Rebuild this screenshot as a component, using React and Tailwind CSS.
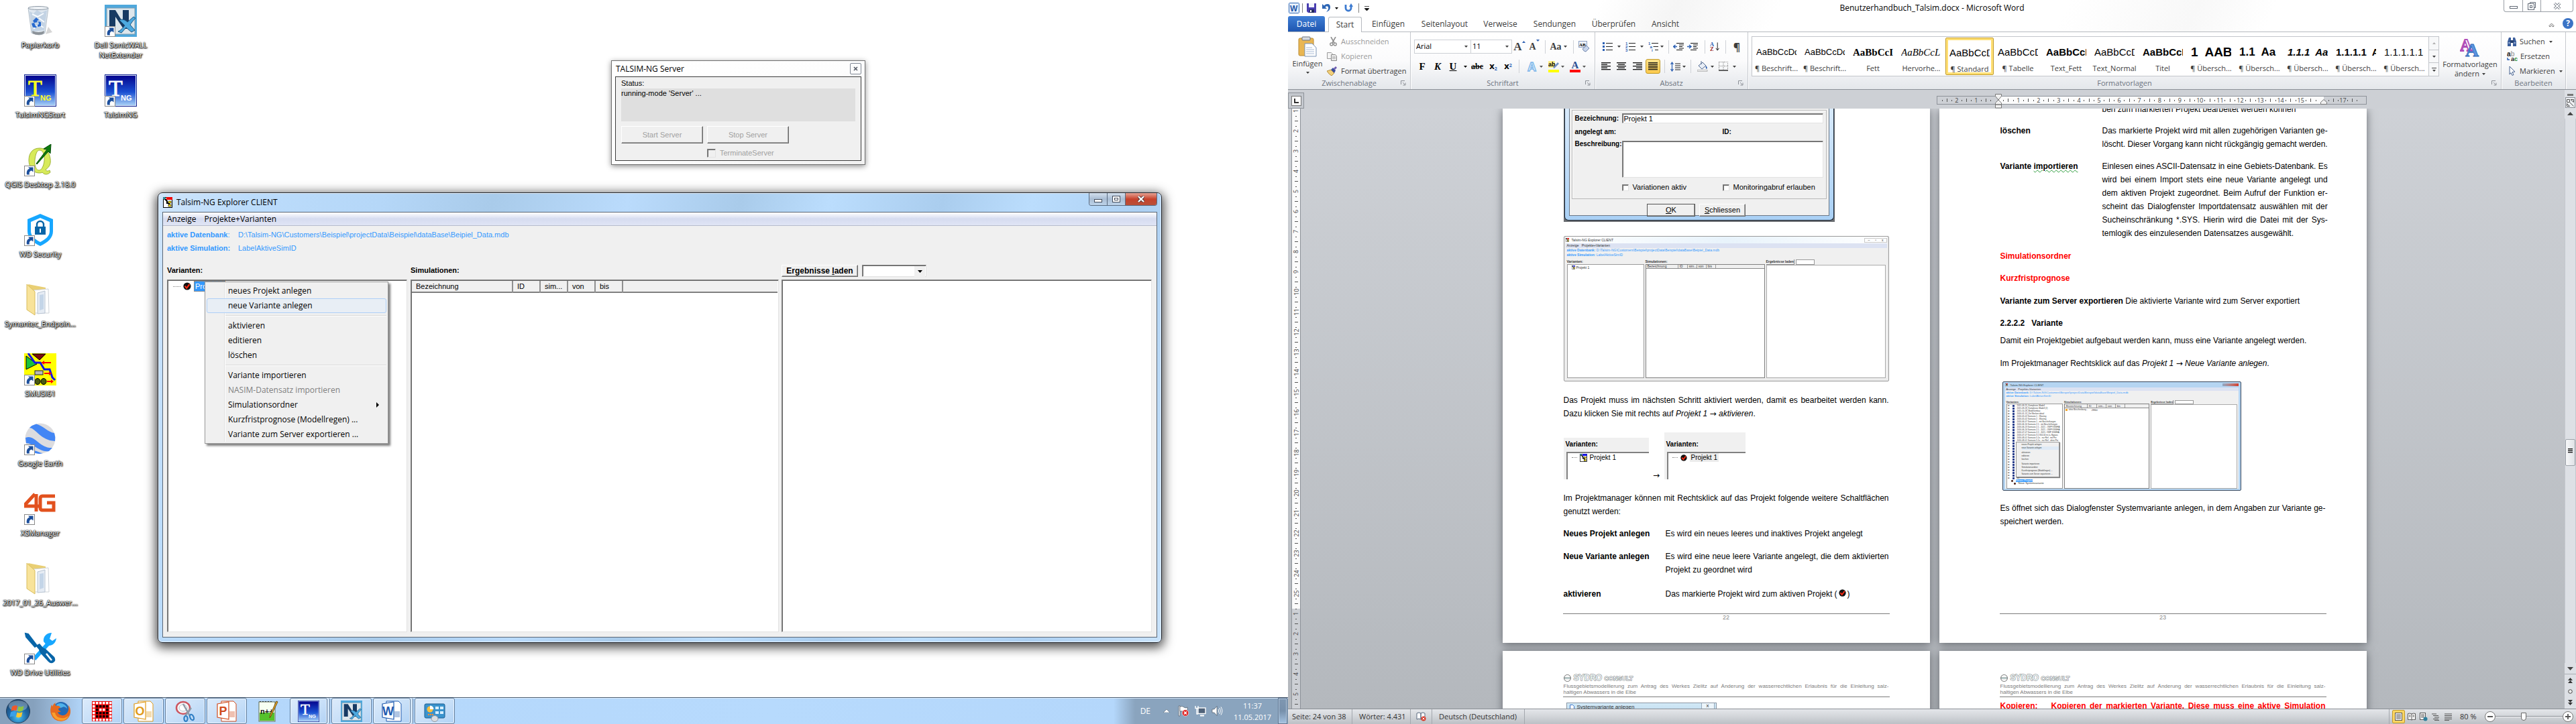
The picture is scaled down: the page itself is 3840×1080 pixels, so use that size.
import React from "react";

/* ---------- small shared pieces ---------- */

const Caret = ({ className = "" }) => (
  <svg width="5" height="3" viewBox="0 0 5 3" className={className} aria-hidden="true">
    <path d="M0 0h5L2.5 3z" fill="currentColor" />
  </svg>
);

const Launcher = () => (
  <svg width="8" height="8" viewBox="0 0 8 8" aria-hidden="true">
    <path d="M.5 6V.5H6" stroke="#8b8f96" fill="none" />
    <path d="M3 3l3 3M7 3.5V7H3.5" stroke="#8b8f96" fill="none" />
  </svg>
);

const CheckBall = ({ size = 12 }) => (
  <svg width={size} height={size} viewBox="0 0 12 12" aria-hidden="true">
    <circle cx="6" cy="6" r="5.6" fill="#111" />
    <path d="M2.6 5.6l2.6 3.2L9.6 3" stroke="#ff2a12" strokeWidth="2.1" fill="none" />
  </svg>
);

const Arrow = () => <span className="font-['DejaVu_Sans',sans-serif] not-italic">→</span>;

const AppIcon = ({ w = 14, h = 16, top = "#f00000" }) => (
  <svg width={w} height={h} viewBox="0 0 14 16" aria-hidden="true">
    <rect x=".5" y=".5" width="13" height="15" fill="#fff" stroke="#000" />
    <rect x="5" y="0" width="9" height="4" fill={top} />
    <path d="M2 2l4 4v3h3v5" stroke="#000" strokeWidth="2" fill="none" />
    <rect x="0" y="0" width="3" height="3" fill="#35d0e8" stroke="#000" strokeWidth=".6" />
    <rect x="8" y="6" width="4" height="3" fill="#ffe600" stroke="#000" strokeWidth=".6" />
    <rect x="8" y="11" width="4" height="3" fill="#ffe600" stroke="#000" strokeWidth=".6" />
  </svg>
);

/* ---------- desktop icons ---------- */

const Shortcut = () => (
  <g>
    <rect x=".5" y="32.5" width="15" height="15" fill="#fff" stroke="#8a8a8a" />
    <path d="M4 45.5c-1-5 1-8 4-9l-2-2h7.500v7l-2.500-2c-3 .8-4 3-3 6z" fill="#1c4f9c" />
  </g>
);

const RecycleBin = () => (
  <svg width="48" height="48" viewBox="0 0 48 48" aria-hidden="true">
    <path d="M32 44l10-3-6-8z" fill="#bbb" opacity=".6" />
    <path d="M6 5l5 37q13 6 20 0l5-37z" fill="#dfe7ef" stroke="#b3bfca" />
    <path d="M8 10l6 3 5-5 7 4 8-4-4 30-18 2z" fill="#c3d3e4" />
    <path d="M12 14l8 4 9-5M14 36l8-6 7 4M22 20l8 6" stroke="#f7fbff" strokeWidth="2" fill="none" />
    <ellipse cx="21" cy="5" rx="15" ry="2.5" fill="#eef2f6" stroke="#8c98a4" />
    <path d="M12 39q10 4 18 0l-.6 4q-8 4-16.8 0z" fill="#8d9399" />
    <path d="M13 24l5-5 4 4-3 1 1 2-5 1zM21 25l4 1v6l-5 1v-3l2-1zM11 28l4-1 2 5 2 .5-1 2-5-1z" fill="#2669cf" />
  </svg>
);

const TalsimIcon = ({ color, size = 48, shortcut = true, id }) => (
  <svg width={size} height={size} viewBox="0 0 48 48" aria-hidden="true">
    <defs>
      <linearGradient id={id} x1="0" y1="0" x2="0" y2="1">
        <stop offset="0" stopColor="#03038c" />
        <stop offset=".55" stopColor="#1a4fd2" />
        <stop offset="1" stopColor="#a9d2f6" />
      </linearGradient>
    </defs>
    <rect x="0" y="0" width="48" height="48" fill="#0d1f8f" />
    <rect x="1.5" y="1.5" width="45" height="45" fill={`url(#${id})`} stroke="#dfe9fb" />
    <text x="6" y="32" fontFamily="Liberation Serif, serif" fontSize="34" fill={color} stroke={color} strokeWidth=".8">T</text>
    <text x="24" y="39" fontFamily="Liberation Sans, sans-serif" fontWeight="bold" fontSize="11" fill={color}>NG</text>
    {shortcut && <Shortcut />}
  </svg>
);

const NetExtender = ({ size = 48, shortcut = true }) => (
  <svg width={size} height={size} viewBox="0 0 48 48" aria-hidden="true">
    <rect width="48" height="48" fill="#4fa8dc" />
    <rect x="3" y="5" width="42" height="39" fill="#dde6ec" stroke="#7e9bad" />
    <path d="M7 8h9l11 18V8h9v28h-8L16 18v18H7z" fill="#173a63" />
    <path d="M20 40c4-2 6-4 10-9l-8-8c4-2 8-1 12 3l9-8 3 2c-4 4-6 7-8 10l7 8-5 3-8-7-7 8z" fill="#4da9df" stroke="#1d567f" />
    {shortcut && <Shortcut />}
  </svg>
);

const Qgis = () => (
  <svg width="48" height="48" viewBox="0 0 48 48" aria-hidden="true">
    <path fillRule="evenodd" fill="#d7ea5a" stroke="#9fb338" d="M23 6C12 6 7 14 7 24s6 19 15 19c2 0 4 0 5-1 3 4 8 4 12 0l-1-3c-3 2-5 1-6-1 6-4 8-9 7-16C38 12 32 6 23 6zM23 9c5 0 8 7 7 16-1 8-4 14-8 14s-7-7-6-16c1-8 3-14 7-14z" />
    <path d="M18 29L34 8l-5-1L40 0l-1 14-3-3-17 19z" fill="#0d7a0f" stroke="#064c08" />
    <Shortcut />
  </svg>
);

const WdSecurity = () => (
  <svg width="48" height="48" viewBox="0 0 48 48" aria-hidden="true">
    <path d="M24 0l19 8v18c0 10-8 17-19 22C13 43 5 36 5 26V8z" fill="#17a7ff" />
    <path d="M24 6l14 6v14c0 7-6 12-14 16-8-4-14-9-14-16V12z" fill="#fff" />
    <rect x="16" y="19" width="16" height="12" fill="#0865a8" />
    <path d="M19 19v-3a5 5 0 0 1 10 0v3" stroke="#0865a8" strokeWidth="2.4" fill="none" />
    <rect x="23" y="22" width="2" height="6" fill="#fff" />
    <Shortcut />
  </svg>
);

const Folder = () => (
  <svg width="48" height="48" viewBox="0 0 48 48" aria-hidden="true">
    <path d="M6 1l26 5v38H12z" fill="#e9cf74" />
    <path d="M14 10l22-2 1 36H14z" fill="#fff" stroke="#cfd3d8" />
    <path d="M20 14l11-3v33l-11 1z" fill="#e6ecf4" stroke="#b8c4d2" />
    <path d="M23 17l6-1v22l-6 2z" fill="#c4d5e8" />
    <path d="M4 1l12 11v35L4 39z" fill="#f8e39a" stroke="#d9bd5d" />
  </svg>
);

const Smusi = () => (
  <svg width="48" height="48" viewBox="0 0 48 48" aria-hidden="true">
    <rect width="48" height="48" fill="#ffff00" />
    <path d="M3 4v20l16-8z" fill="#19c23a" stroke="#000" />
    <path d="M12 1h20l-9 9z" fill="#7a0d10" stroke="#000" />
    <path d="M6 0l10 14h8l6 10h8l4 12 4 4" stroke="#1414e6" strokeWidth="3" fill="none" />
    <path d="M40 14H26M30 30h10M34 42h8" stroke="#f00" strokeWidth="2" fill="none" />
    <path d="M26 14l4-3v6zM41 30l-4-3v6zM44 42l-4-3v6z" fill="#f00" />
    <rect x="16" y="26" width="12" height="6" fill="#b9b9b9" stroke="#222" />
    <ellipse cx="20" cy="42" rx="4" ry="4.5" fill="#4a5a10" stroke="#000" />
    <ellipse cx="29" cy="42" rx="4" ry="4.5" fill="#4a5a10" stroke="#000" />
    <Shortcut />
  </svg>
);

const Earth = () => (
  <svg width="48" height="48" viewBox="0 0 48 48" aria-hidden="true">
    <circle cx="24" cy="23" r="22.5" fill="#dcdcdf" />
    <path d="M8 7C18 8 24 26 46 27q1-6-1-12C36 14 28 4 18 1.500Q12 3 8 7z" fill="#4286f5" />
    <path d="M2 22C16 16 22 38 42 37l-5 5C22 44 14 30 3 30z" fill="#4286f5" />
    <path d="M10 41c8-1 12 4 18 4q-10 3-18-4z" fill="#4286f5" />
    <Shortcut />
  </svg>
);

const FourG = () => (
  <svg width="48" height="48" viewBox="0 0 48 48" aria-hidden="true">
    <path d="M16 2L2 17v3h22M18 2v26" stroke="#e2511e" strokeWidth="5" fill="none" />
    <path d="M46 5H27q-3 0-3 4v13q0 4 3 4h17V15h-10" stroke="#e2511e" strokeWidth="5" fill="none" />
    <Shortcut />
  </svg>
);

const WdTools = () => (
  <svg width="48" height="48" viewBox="0 0 48 48" aria-hidden="true">
    <path d="M15 40L35 18" stroke="#17a7ff" strokeWidth="6" />
    <path d="M41 1c-8 0-13 6-12 13l5 6c6 1 13-2 14-11l-6 4-4-3z" fill="#17a7ff" />
    <path d="M2 2l4 1 13 17-3 2L3 7z" fill="#0865a8" stroke="#0865a8" strokeWidth="2" />
    <path d="M17 20l6-3 5 6 4 2 13 12q3 5-1 8-4 3-8-1L24 31l-2-5z" fill="#0865a8" />
    <path d="M33 32l8 10" stroke="#fff" strokeWidth="2.5" />
    <Shortcut />
  </svg>
);

const desktopColumns = [
  [
    ["Papierkorb", <RecycleBin />],
    ["TalsimNGStart", <TalsimIcon color="#ffff1e" id="tng-start" />],
    ["QGIS Desktop 2.18.0", <Qgis />],
    ["WD Security", <WdSecurity />],
    ["Symantec_Endpoin...", <Folder />],
    ["SMUSI61", <Smusi />],
    ["Google Earth", <Earth />],
    ["XSManager", <FourG />],
    ["2017_01_26_Auswer...", <Folder />],
    ["WD Drive Utilities", <WdTools />],
  ],
  [
    ["Dell SonicWALL NetExtender", <NetExtender />],
    ["TalsimNG", <TalsimIcon color="#ffffff" id="tng-app" />],
  ],
];

function DesktopIcons() {
  return (
    <div className="flex">
      {desktopColumns.map((col, i) => (
        <div key={i} className="w-[120px]">
          {col.map(([label, icon]) => (
            <button key={label} className="flex h-[104px] w-full flex-col items-center pt-[7px]">
              {icon}
              <span className="mt-1 max-w-[116px] text-center text-[11px] leading-[15px] text-white [text-shadow:0_0_1px_#000,0_0_2px_#000,0_1px_2px_#000,1px_1px_2px_#000]">
                {label}
              </span>
            </button>
          ))}
        </div>
      ))}
    </div>
  );
}

/* ---------- server window ---------- */

const raised = "border border-t-white border-l-white border-r-[#696969] border-b-[#696969] shadow-[inset_-1px_-1px_0_#a0a0a0]";
const sunken = "border border-t-[#828282] border-l-[#828282] border-r-[#e3e3e3] border-b-[#e3e3e3] shadow-[inset_1px_1px_0_#696969]";

function ServerWindow() {
  return (
    <section className="absolute left-[911px] top-[90px] w-[379px] border border-[#6f6f6f] bg-gradient-to-br from-white via-[#fdfdfd] to-[#f1f1f1] px-[5px] pb-[5px] shadow-[0_2px_8px_rgba(0,0,0,0.45)]">
      <header className="flex h-[23px] items-center justify-between pl-px text-[12px]">
        <h2>TALSIM-NG Server</h2>
        <button aria-label="Schließen" className="flex h-[17px] w-[17px] items-center justify-center rounded-[2px] border border-[#808894] bg-[#fbfbfb]">
          <svg width="7" height="7" viewBox="0 0 7 7"><path d="M1 1l5 5M6 1L1 6" stroke="#555b66" strokeWidth="1.6" /></svg>
        </button>
      </header>
      <div className="border border-[#3c3c3c] bg-[#f0f0f0] px-2 pb-1 pt-0.5 font-['Liberation_Sans',sans-serif] text-[11px]">
        <p className="leading-[15px]">Status:</p>
        <div className="h-[49px] bg-[#dfdfdf] leading-[15px]">running-mode 'Server' ...</div>
        <div className="mt-[7px] flex gap-1.5 text-[#a0a0a0]">
          <button className={`h-[26px] w-[122px] ${raised}`}>Start Server</button>
          <button className={`h-[26px] w-[122px] ${raised}`}>Stop Server</button>
        </div>
        <label className="ml-32 mt-2 flex items-center gap-1.5 leading-[13px] text-[#a0a0a0]">
          <input type="checkbox" className={`size-[13px] appearance-none bg-[#f0f0f0] ${sunken}`} />
          TerminateServer
        </label>
      </div>
    </section>
  );
}

/* ---------- explorer window ---------- */

const menuGroups = [
  [["neues Projekt anlegen"], ["neue Variante anlegen", "hot"]],
  [["aktivieren"], ["editieren"], ["löschen"]],
  [
    ["Variante importieren"],
    ["NASIM-Datensatz importieren", "off"],
    ["Simulationsordner", "sub"],
    ["Kurzfristprognose (Modellregen) ..."],
    ["Variante zum Server exportieren ..."],
  ],
];

function ContextMenu() {
  return (
    <div role="menu" className="absolute left-[55px] top-0.5 z-10 w-[274px] border border-[#979797] bg-[#f0f0f0] p-0.5 text-[12px] shadow-[3px_3px_3px_rgba(0,0,0,0.5)]">
      <div className="bg-[linear-gradient(to_right,transparent_26px,#e0e0e0_26px,#e0e0e0_27px,#fff_27px,#fff_28px,transparent_28px)] font-['Open_Sans',sans-serif]">
        {menuGroups.map((items, i) => (
          <div key={i}>
            {i > 0 && <div className="mb-1 ml-7 mt-[3px] h-px bg-[#d8d8d8] shadow-[0_1px_0_#fff]" />}
            {items.map(([label, kind]) => (
              <button
                key={label}
                role="menuitem"
                disabled={kind === "off"}
                className={
                  "flex h-[22px] w-full items-center justify-between rounded-[3px] border pl-[31px] pr-2.5 " +
                  (kind === "hot" ? "border-[#aecff7] bg-[#e6edf6]/80" : kind === "off" ? "border-transparent text-[#808080]" : "border-transparent")
                }
              >
                {label}
                {kind === "sub" && <svg width="4" height="8" viewBox="0 0 4 8"><path d="M0 0l4 4-4 4z" fill="#000" /></svg>}
              </button>
            ))}
          </div>
        ))}
      </div>
    </div>
  );
}

function ExplorerWindow() {
  return (
    <section className="absolute bottom-[121px] left-[235px] right-[188px] top-[287px] flex flex-col rounded-[7px] border border-[#20242c] bg-[linear-gradient(105deg,#cfe5fb_0,#bcdcfb_8%,#b5d7f8_20%,#a9cbea_30%,#badbfc_42%,#a9cbea_52%,#bbddfd_60%,#aacdee_70%,#bbddfd_78%,#add0f2_88%,#c9e3fb_100%)] px-1.5 pb-[7px] shadow-[inset_0_0_0_1px_#e6f3ff,0_4px_16px_3px_rgba(0,0,0,0.7)]">
      <header className="flex h-[28px] items-center pl-px">
        <AppIcon />
        <h2 className="ml-1.5 text-[12px]">Talsim-NG Explorer CLIENT</h2>
        <div className="ml-auto flex h-[19px] self-start overflow-hidden rounded-b-[4px] border border-t-0 border-[#5a6b80]">
          <button aria-label="Minimieren" className="flex w-[27px] items-end justify-center border-r border-[#5a6b80] bg-gradient-to-b from-[#d4e0ee] via-[#a9bdd3] to-[#bdd3ea] pb-1">
            <span className="h-[5px] w-[12px] border border-[#434c5c] bg-white" />
          </button>
          <button aria-label="Maximieren" className="flex w-[27px] items-center justify-center border-r border-[#5a6b80] bg-gradient-to-b from-[#d4e0ee] via-[#a9bdd3] to-[#bdd3ea]">
            <span className="h-[10px] w-[12px] border border-[#434c5c] bg-white p-[2px]"><span className="block h-full border border-[#434c5c]" /></span>
          </button>
          <button aria-label="Schließen" className="flex w-[46px] items-center justify-center bg-gradient-to-b from-[#e5a193] via-[#c6412b] to-[#b8503a]">
            <svg width="12" height="10" viewBox="0 0 12 10"><path d="M2 1l8 8M10 1L2 9" stroke="#43343a" strokeWidth="4" /><path d="M2 1l8 8M10 1L2 9" stroke="#fff" strokeWidth="2.4" /></svg>
          </button>
        </div>
      </header>
      <div className="flex min-h-0 flex-1 flex-col border border-[#5b6776] bg-[#f0f0f0] font-['Liberation_Sans',sans-serif] text-[11px]">
        <nav className="flex h-5 items-center gap-3 border-b border-[#b6bccc] bg-gradient-to-b from-white via-[#d6dcf0] to-[#e0e5f5] pl-1.5 font-['Open_Sans',sans-serif] text-[12px]">
          <button>Anzeige</button>
          <button>Projekte+Varianten</button>
        </nav>
        <dl className="mt-[3px] grid grid-cols-[106px_1fr] pl-1.5 leading-5 text-[#3399ff]">
          <dt><b>aktive Datenbank</b>:</dt>
          <dd>D:\Talsim-NG\Customers\Beispiel\projectData\Beispiel\dataBase\Beipiel_Data.mdb</dd>
          <dt><b>aktive Simulation:</b></dt>
          <dd>LabelAktiveSimID</dd>
        </dl>
        <div className="mb-[7px] mt-[13px] grid min-h-0 flex-1 grid-cols-[358fr_550fr_552fr] gap-x-1 pl-1.5 pr-[7px]">
          <div className="flex flex-col">
            <h3 className="h-6 pt-0.5 font-bold">Varianten:</h3>
            <div className={`relative flex-1 bg-white ${sunken}`}>
              <div className="flex h-[18px] items-center pl-2">
                <span className="mr-1 w-[11px] border-t border-dotted border-[#808080]" />
                <CheckBall />
                <span className="ml-1 h-4 w-[47px] border border-dotted border-[#c87a2a] bg-[#3399ff] pl-px leading-[14px] text-white">Projekt 1</span>
              </div>
              <ContextMenu />
            </div>
          </div>
          <div className="flex flex-col pl-px">
            <h3 className="h-6 pt-0.5 font-bold">Simulationen:</h3>
            <div className={`flex-1 bg-white p-px ${sunken}`}>
              <table className="w-full table-fixed border-collapse bg-[#f0f0f0] text-left">
                <thead>
                  <tr className="h-[17px] border-b-2 border-[#808080]">
                    <th className="w-[150px] border-r-2 border-[#909090] pl-1.5 font-normal leading-[15px]">Bezeichnung</th>
                    <th className="w-[41px] border-r-2 border-[#909090] pl-1.5 font-normal leading-[15px]">ID</th>
                    <th className="w-[41px] border-r-2 border-[#909090] pl-1.5 font-normal leading-[15px]">sim...</th>
                    <th className="w-[41px] border-r-2 border-[#909090] pl-1.5 font-normal leading-[15px]">von</th>
                    <th className="w-[41px] border-r-2 border-[#909090] pl-1.5 font-normal leading-[15px]">bis</th>
                    <th />
                  </tr>
                </thead>
              </table>
            </div>
          </div>
          <div className="flex flex-col">
            <div className="flex h-6 items-start gap-1.5 pt-0.5">
              <button className={`h-[18px] w-[114px] text-[12px] font-bold leading-4 ${raised}`}>Ergebnisse <u>l</u>aden</button>
              <div className="relative">
                <select aria-label="Ergebnis" className={`h-[18px] w-24 appearance-none bg-white ${sunken}`}><option></option></select>
                <span className="pointer-events-none absolute right-0.5 top-0.5 flex h-4 w-4 items-center justify-center bg-[#f0f0f0]"><svg width="7" height="4" viewBox="0 0 7 4"><path d="M0 0h7L3.500 4z" /></svg></span>
              </div>
            </div>
            <div className={`flex-1 bg-white ${sunken}`} />
          </div>
        </div>
      </div>
    </section>
  );
}

/* ---------- taskbar ---------- */

const OfficeDoc = ({ letter, main }) => (
  <svg width="32" height="32" viewBox="0 0 32 32" aria-hidden="true">
    <path d="M8 1h18l4 4v26H8z" fill="#fff" stroke={main} />
    <path d="M20 16h8v9h-8z" fill={main} opacity=".35" />
    <path d="M2 5l17-3v26L2 25z" fill="#fff" stroke={main} strokeWidth="1.2" />
    <text x="10.500" y="22" textAnchor="middle" fontFamily="Liberation Sans, sans-serif" fontWeight="bold" fontSize="18" fill={main}>{letter}</text>
  </svg>
);

const StartOrb = () => (
  <svg width="38" height="38" viewBox="0 0 38 38" aria-hidden="true">
    <defs>
      <radialGradient id="orb" cx=".5" cy=".75" r=".75">
        <stop offset="0" stopColor="#4cc3f2" />
        <stop offset=".5" stopColor="#1f6aa8" />
        <stop offset="1" stopColor="#1c3f66" />
      </radialGradient>
    </defs>
    <circle cx="19" cy="19" r="17.5" fill="url(#orb)" stroke="#243f5c" />
    <ellipse cx="19" cy="11" rx="14" ry="8" fill="#fff" opacity=".3" />
    <path d="M10 12q4-3 8-1l-1.500 7q-4-1.500-8 .8z" fill="#f0582a" />
    <path d="M19.500 11.500q4 2 8-.5L26 18q-4 2.500-8 .5z" fill="#8ec63f" />
    <path d="M8 20.500q4-2.300 8-.8L14.500 27q-4-1.500-8 .8z" fill="#3aa0e8" />
    <path d="M17.500 20.500q4 2 8-.4L24 27q-4 2.500-8 .6z" fill="#fdc82f" />
  </svg>
);

const Firefox = () => (
  <svg width="32" height="32" viewBox="0 0 32 32" aria-hidden="true">
    <circle cx="17" cy="14" r="12" fill="#2369b4" />
    <path d="M10 6q6-4 12 0 4 3 4 6-4-4-7-2-4 2-8 0z" fill="#4fb2ea" />
    <path d="M3 6Q0 14 2 20q4 11 15 11 12-1 14-13 .5-7-3-11 1 6-1 10-3 6-9 5-5-1-6-5 3 1 5-1-3 0-4-3 0-2 3-2-1-4-6-3Q7 6 9 3 5 5 4.500 9z" fill="#e66a1f" />
    <path d="M3 18q3 11 14 12 8 0 12-8-5 5-12 4-8-1-9-8z" fill="#f9a02c" />
  </svg>
);

const PixelDoc = () => (
  <svg width="30" height="30" viewBox="0 0 30 30" aria-hidden="true">
    <rect width="30" height="30" fill="#e00" />
    {[0, 1, 2, 3, 4, 5].map((r) =>
      [0, 1, 2, 3, 4, 5].map((c) => (
        <rect key={`${r}${c}`} x={1 + c * 5} y={1 + r * 5} width="3.500" height="3.500" fill={(c === 1 || c === 4 || r === 1 || r === 4 || r === 3) && c > 0 && c < 5 && r > 0 && r < 5 ? "#000" : "#fff"} />
      ))
    )}
  </svg>
);

const Snip = () => (
  <svg width="34" height="34" viewBox="0 0 34 34" aria-hidden="true">
    <ellipse cx="14" cy="12" rx="10" ry="9" fill="#f6f8fa" stroke="#cc5560" strokeWidth="2.5" />
    <ellipse cx="14" cy="12" rx="6" ry="5" fill="#fff" stroke="#b9c0c8" />
    <path d="M14 6l10 18M26 12L17 24" stroke="#8e9aa8" strokeWidth="2.5" />
    <ellipse cx="18" cy="28" rx="2.6" ry="4" fill="none" stroke="#2f7fc4" strokeWidth="2.2" />
    <ellipse cx="27" cy="26" rx="2.6" ry="4.5" fill="none" stroke="#2f7fc4" strokeWidth="2.2" transform="rotate(-25 27 26)" />
  </svg>
);

const Npp = () => (
  <svg width="32" height="32" viewBox="0 0 32 32" aria-hidden="true">
    <rect x="2" y="2" width="24" height="29" fill="#f7fff2" stroke="#5c6c54" />
    <rect x="3" y="18" width="22" height="12" fill="#55c22c" />
    <path d="M4 2v-1M8 2v-1M12 2v-1M16 2v-1M20 2v-1" stroke="#333" strokeWidth="2" />
    <text x="4" y="20" fontFamily="Liberation Sans, sans-serif" fontWeight="bold" fontSize="11" fill="#111">n++</text>
    <path d="M30 2l-10 21-2 3 .5-4L28 1z" fill="#f3b229" stroke="#6b4a12" />
  </svg>
);

const Panel = () => (
  <svg width="34" height="32" viewBox="0 0 34 32" aria-hidden="true">
    <rect x="2" y="5" width="30" height="21" rx="2" fill="#3a93cd" stroke="#1d5f92" />
    <circle cx="10" cy="13" r="4.5" fill="#ffc03a" />
    <path d="M10 13V7.500a5.500 5.500 0 0 1 5.500 5.500z" fill="#fff" />
    <path d="M18 9h5v4h-5zM25 9h5v4h-5zM18 16h5v4h-5zM25 16h5v4h-5z" fill="#d7efff" />
    <path d="M7 21h8" stroke="#ff8c2a" strokeWidth="2" strokeDasharray="2 1" />
    <ellipse cx="17" cy="27" rx="5" ry="4.5" fill="#d9dde2" stroke="#9298a0" />
  </svg>
);

const tasks = [
  ["Kalender", <PixelDoc />, "open"],
  ["Outlook", <OfficeDoc letter="O" main="#e09a1a" />, "open"],
  ["Snipping Tool", <Snip />, "open"],
  ["PowerPoint", <OfficeDoc letter="P" main="#d04a1c" />, "open"],
  ["Notepad++", <Npp />, ""],
  ["TalsimNG", <TalsimIcon color="#fff" size={32} shortcut={false} id="tng-task" />, "stack"],
  ["NetExtender", <NetExtender size={32} shortcut={false} />, "open"],
  ["Word", <OfficeDoc letter="W" main="#1f5bb0" />, "stack"],
  ["Systemsteuerung", <Panel />, "open"],
];

const taskFace = "border border-[#5f7c9c] bg-gradient-to-br from-[#dcebfb] via-[#c9e0f8] to-[#b2d3f5] shadow-[inset_0_0_0_1px_#eaf4ff]";

function Taskbar() {
  return (
    <footer className="absolute inset-x-0 bottom-0 flex h-10 items-stretch border-t border-[#4c5d70] bg-[linear-gradient(to_right,#86a1bd_0,#86a1bd_50px,#b3d6fa_125px,#b7dafd_60%,#b4d7fb_calc(100%-260px),#8aa4be_calc(100%-228px),#8aa4be_100%)] shadow-[inset_0_1px_0_#dcecfc]">
      <button aria-label="Start" className="flex w-[60px] items-center justify-center pr-1.5"><StartOrb /></button>
      <button aria-label="Firefox" className="flex w-[60px] items-center justify-center"><Firefox /></button>
      <div className="ml-0.5 flex gap-0.5">
        {tasks.map(([name, icon, kind]) => (
          <div key={name} className={"flex w-[60px] " + (kind === "stack" ? "rounded-[3px] border-r border-[#5f7c9c] bg-[#d3e6fa] pr-[3px]" : "")}>
            <button aria-label={name} className={"flex flex-1 items-center justify-center rounded-[3px] " + (kind ? taskFace : "")}>
              {icon}
            </button>
          </div>
        ))}
      </div>
      <div className="ml-auto flex items-center text-[12px] text-white">
        <span className="mr-[19px]">DE</span>
        <svg width="10" height="5" viewBox="0 0 10 5"><path d="M0 5h10L5 0z" fill="#fff" stroke="#4f5f72" strokeWidth=".6" /></svg>
        <svg className="ml-3" width="17" height="17" viewBox="0 0 17 17" aria-hidden="true">
          <path d="M1 1h2v15H1z" fill="#fff" stroke="#3c4855" strokeWidth=".6" />
          <path d="M3 2q4-1 6 1t5 0v7q-3 2-5 0T3 9z" fill="#fff" stroke="#3c4855" strokeWidth=".6" />
          <circle cx="11" cy="11.500" r="4.800" fill="#d22" stroke="#fff" strokeWidth=".6" />
          <path d="M9 9.500l4 4M13 9.500l-4 4" stroke="#fff" strokeWidth="1.500" />
        </svg>
        <svg className="ml-2" width="17" height="17" viewBox="0 0 17 17" aria-hidden="true">
          <rect x="5" y="4" width="11" height="8.500" fill="#50637a" stroke="#fff" strokeWidth="1.400" />
          <path d="M8 15.500h6" stroke="#fff" strokeWidth="2" />
          <path d="M1 1v3.500h4V1M3 4v9h2" stroke="#fff" strokeWidth="1.400" fill="none" />
        </svg>
        <svg className="ml-2" width="17" height="17" viewBox="0 0 17 17" aria-hidden="true">
          <path d="M1 6h3l4-4.500v14L4 11H1z" fill="#fff" stroke="#3c4855" strokeWidth=".6" />
          <path d="M10 6q1.500 2.500 0 5M12 4q3 4.500 0 9M14 2.500q4 6 0 12" stroke="#fff" fill="none" />
        </svg>
        <div className="ml-3 w-16 text-center text-[11px] leading-[17px]"><div>11:37</div><div>11.05.2017</div></div>
        <button aria-label="Desktop anzeigen" className="ml-1.5 mr-px h-full w-[14px] border border-[#5d7591] bg-gradient-to-b from-[#7f97b1] via-[#7790ab] to-[#a5c3e2] shadow-[inset_0_0_0_1px_#b7cbe0]" />
      </div>
    </footer>
  );
}

/* ---------- word: title bar and ribbon ---------- */

const Sep = ({ className }) => (
  <span className={`flex h-full shrink-0 items-center justify-center ${className}`}><span className="h-5 w-px bg-[#cfd2d7]" /></span>
);

const RB = ({ label, className = "", children }) => (
  <button aria-label={label} title={label} className={`flex h-full shrink-0 items-center justify-center gap-[3px] ${className}`}>{children}</button>
);

const Bars = ({ rows, w = 14 }) => (
  <svg width={w} height="12" viewBox={`0 0 ${w} 12`} aria-hidden="true">
    {rows.map(([x, len], i) => <rect key={i} x={x} y={i * 2.5} width={len} height="1.3" fill="#111" />)}
  </svg>
);

const ListIcon = ({ kind }) => (
  <svg width="15" height="15" viewBox="0 0 15 15" aria-hidden="true">
    {[2, 7, 12].map((y, i) => (
      <g key={y}>
        <path d={`M${kind === "multi" ? 5 + i * 2.5 : 5} ${y + 0.5}H15`} stroke="#222" />
        {kind === "bullet"
          ? <rect x="0" y={y - 1} width="3" height="3" fill="#2b5fb3" />
          : <text x={kind === "multi" ? i * 2.5 : 0} y={y + 3} fontSize="6" fontFamily="Liberation Sans, sans-serif" fontWeight="bold" fill="#2b5fb3">{kind === "multi" ? ["1", "a", "i"][i] : i + 1}</text>}
      </g>
    ))}
  </svg>
);

const IndentIcon = ({ right }) => (
  <svg width="16" height="14" viewBox="0 0 16 14" aria-hidden="true">
    <path d="M5 1.500h11M9 4h7M9 6.500h5M9 9h7M5 11.500h9" stroke="#111" />
    <path d={right ? "M0 6.500h5M3 4l3 2.500L3 9" : "M6 6.500H1M3.500 4l-3 2.500 3 2.500"} stroke="#2b5fb3" strokeWidth="1.5" fill="none" />
  </svg>
);

const tabs = [
  ["Einfügen", "w-[79px]"], ["Seitenlayout", "w-[89px]"], ["Verweise", "w-[77px]"], ["Sendungen", "w-[85px]"], ["Überprüfen", "w-[91px]"], ["Ansicht", "w-[63px]"],
];

function TitleAndTabs() {
  return (
    <header className="bg-[linear-gradient(115deg,#fff_0,#fff_24%,#f5f5f5_30%,#fff_38%,#fff_60%,#f8f8f8_70%,#fff_76%)]">
      <div className="relative flex h-6 items-center justify-between pl-px">
        <div className="flex items-center">
          <svg width="16" height="16" viewBox="0 0 16 16" aria-hidden="true"><rect x=".5" y=".5" width="15" height="15" rx="1" fill="#e9f1fc" stroke="#2d66b5" /><text x="2" y="12.500" fontSize="12" fontWeight="bold" fontFamily="Liberation Sans, sans-serif" fill="#1d56a8">W</text></svg>
          <span className="mx-1 h-3.5 w-px bg-[#808080]" />
          <button aria-label="Speichern" className="ml-0.5">
            <svg width="14" height="14" viewBox="0 0 14 14"><path d="M0 0h14v14H2l-2-2z" fill="#4a3fb0" /><rect x="3" y="0" width="8" height="6" fill="#f2f4fb" /><rect x="4" y="9" width="7" height="5" fill="#222a5c" /><rect x="5" y="10" width="2" height="3" fill="#fff" /></svg>
          </button>
          <button aria-label="Rückgängig" className="ml-2 flex items-center gap-1.5">
            <svg width="14" height="14" viewBox="0 0 14 14"><path d="M1 1v7h7L5.500 5.500Q9 3 10 6t-3 7q6-2 6-7T9 1 4 3.500z" fill="#2d66b5" /></svg>
            <Caret />
          </button>
          <button aria-label="Wiederholen" className="ml-2">
            <svg width="14" height="14" viewBox="0 0 14 14"><path d="M3 2v5a4 4 0 0 0 8 0V5" stroke="#3c7ad0" strokeWidth="2.8" fill="none" /><path d="M8 5l3-5 3 5z" fill="#3c7ad0" /></svg>
          </button>
          <span className="mx-2 h-3.5 w-px bg-[#808080]" />
          <button aria-label="Symbolleiste anpassen"><svg width="7" height="7" viewBox="0 0 7 7"><path d="M0 .5h7M0 3.500h7L3.500 7z" stroke="#222" strokeWidth=".8" /></svg></button>
        </div>
        <div className="mr-1 flex h-[18px] self-start rounded-b-[4px] border border-t-0 border-[#9a9fa6] bg-white/70">
          <button aria-label="Minimieren" className="flex w-[28px] items-end justify-center border-r border-[#9a9fa6] pb-1"><span className="h-[4px] w-3 border border-[#626a76]" /></button>
          <button aria-label="Verkleinern" className="flex w-[27px] items-center justify-center border-r border-[#9a9fa6]">
            <svg width="12" height="12" viewBox="0 0 12 12"><path d="M3.500 2.500v-2h8v8h-2" stroke="#626a76" fill="none" /><rect x=".5" y="2.500" width="9" height="9" fill="#fff" stroke="#626a76" /><rect x="3.500" y="5.500" width="3" height="3" fill="none" stroke="#626a76" /></svg>
          </button>
          <button aria-label="Schließen" className="flex w-[47px] items-center justify-center">
            <svg width="12" height="10" viewBox="0 0 12 10"><path d="M2 1l8 8M10 1L2 9" stroke="#626a76" strokeWidth="3.6" /><path d="M2 1l8 8M10 1L2 9" stroke="#fff" strokeWidth="1.8" /></svg>
          </button>
        </div>
        <h1 className="pointer-events-none absolute inset-0 flex items-center justify-center text-[12px]">Benutzerhandbuch_Talsim.docx - Microsoft Word</h1>
      </div>
      <nav className="flex h-6 items-end border-b border-[#b6babf] text-[12px] text-[#3d3d3d]">
        <button className="h-[23px] w-[55px] rounded-t-[3px] bg-gradient-to-b from-[#3f7fd6] to-[#1f56b0] text-white">Datei</button>
        <button className="relative top-px ml-[5px] h-[23px] w-[50px] rounded-t-[3px] border border-b-0 border-[#b6babf] bg-white">Start</button>
        {tabs.map(([t, w]) => <button key={t} className={`h-[23px] ${w}`}>{t}</button>)}
        <button aria-label="Menüband minimieren" className="mb-1.5 ml-auto mr-3"><svg width="9" height="8" viewBox="0 0 9 8"><path d="M1 5.500L4.500 2 8 5.500l-1 1.500-2.500-2L2 7z" fill="#fff" stroke="#666" /></svg></button>
        <button aria-label="Hilfe" className="mb-1 mr-1 flex size-4 items-center justify-center rounded-full bg-[#3b73c5] text-[12px] font-bold leading-none text-white">?</button>
      </nav>
    </header>
  );
}

const Group = ({ title, launcher, className, children }) => (
  <section className={`flex shrink-0 flex-col border-r border-[#c6c9ce] shadow-[1px_0_0_#fff] ${className}`}>
    <div className="min-h-0 flex-1">{children}</div>
    <div className="relative flex h-[17px] items-center justify-center text-[#6d7480]">
      {title}
      {launcher && <span className="absolute right-1.5 top-1"><Launcher /></span>}
    </div>
  </section>
);

const sans = "font-['Liberation_Sans',sans-serif]";
const styles = [
  ["AaBbCcDd", "¶ Beschrift...", `${sans} text-[13px]`],
  ["AaBbCcDd", "¶ Beschrift...", `${sans} text-[13px]`],
  ["AaBbCcI", "Fett", "font-['Liberation_Serif',serif] text-[15px] font-bold"],
  ["AaBbCcL", "Hervorhe...", "font-['Liberation_Serif',serif] text-[15px] italic"],
  ["AaBbCcD", "¶ Standard", `${sans} text-[15px]`],
  ["AaBbCcD", "¶ Tabelle", `${sans} text-[15px]`],
  ["AaBbCcI", "Text_Fett", `${sans} text-[15px] font-bold`],
  ["AaBbCcD", "Text_Normal", `${sans} text-[15px]`],
  ["AaBbCcI", "Titel", `${sans} text-[15px] font-bold`],
  ["1  AAB", "¶ Übersch...", `${sans} text-[19px] font-bold`],
  ["1.1  Aa", "¶ Übersch...", `${sans} text-[17px] font-bold`],
  ["1.1.1  Aa", "¶ Übersch...", `${sans} text-[15px] font-bold italic`],
  ["1.1.1.1  A", "¶ Übersch...", `${sans} text-[15px] font-bold`],
  ["1.1.1.1.1", "¶ Übersch...", `${sans} text-[15px]`],
];

function Ribbon() {
  return (
    <div className="flex h-[86px] shrink-0 whitespace-nowrap border-b border-[#8b9097] bg-gradient-to-b from-white via-[#fbfbfc] to-[#e4e7eb] text-[11px] text-[#3d3d3d]">
      <Group title="Zwischenablage" launcher className="w-[183px]">
        <div className="flex">
          <button className="flex w-[58px] shrink-0 flex-col items-center pt-1.5">
            <svg width="28" height="31" viewBox="0 0 28 31" aria-hidden="true">
              <rect x="1" y="3" width="22" height="26" rx="2" fill="#e9b652" stroke="#b98a35" />
              <rect x="6" y="1" width="12" height="5" rx="1" fill="#d5d9df" stroke="#6c7480" />
              <path d="M10 11h11l6 6v13H10z" fill="#fff" stroke="#7b93b5" />
              <path d="M12 17h9M12 20h12M12 23h12M12 26h12" stroke="#a9bcd6" />
            </svg>
            <span className="mt-0.5 leading-4">Einfügen</span>
            <Caret className="mt-1" />
          </button>
          <div className="flex flex-col pt-[3px]">
            <button className="flex h-[22px] items-center gap-1.5 pl-1 text-[#9a9a9a]">
              <svg width="11" height="14" viewBox="0 0 11 14"><path d="M2 0l5 9M9 0L4 9" stroke="#8f8f8f" strokeWidth="1.6" /><circle cx="2.8" cy="11" r="2" fill="none" stroke="#8f8f8f" strokeWidth="1.4" /><circle cx="8.2" cy="11" r="2" fill="none" stroke="#8f8f8f" strokeWidth="1.4" /></svg>
              Ausschneiden
            </button>
            <button className="flex h-[22px] items-center gap-1.5 text-[#9a9a9a]">
              <svg width="15" height="13" viewBox="0 0 15 13"><path d="M.5.5h6l2 2v7h-8z" fill="#f4f4f4" stroke="#9a9a9a" /><path d="M6.500 3.500h6l2 2v7h-8z" fill="#e9e9e9" stroke="#8a8a8a" /><path d="M8 7h5M8 9h5" stroke="#a5a5a5" /></svg>
              Kopieren
            </button>
            <button className="flex h-[22px] items-center gap-1.5">
              <svg width="15" height="14" viewBox="0 0 15 14"><path d="M0 7l6-2 5 5-4 4q-4-2-7-7z" fill="#f1cf7a" stroke="#b6903c" /><path d="M6 5l3-3 4 4-2 4z" fill="#3b4e9c" /><path d="M10 3l3-3 2 2-3 3z" fill="#6f5bb0" /></svg>
              Format übertragen
            </button>
          </div>
        </div>
      </Group>
      <Group title="Schriftart" launcher className="w-[275px]">
        <div className="flex h-[32px] items-center pl-[5px] pt-[11px]">
          <label className="relative flex h-[21px] w-[85px] items-center border border-[#cdd0d5] bg-white">
            <input aria-label="Schriftart" defaultValue="Arial" className="w-full bg-transparent pl-0.5 text-black" /><Caret className="absolute right-1" />
          </label>
          <label className="relative flex h-[21px] w-[61px] items-center border border-l-0 border-[#cdd0d5] bg-white">
            <input aria-label="Schriftgrad" defaultValue="11" className="w-full bg-transparent pl-0.5 text-black" /><Caret className="absolute right-1" />
          </label>
          <RB label="Schrift vergrößern" className="w-[22px] font-['Liberation_Serif',serif] text-[17px] font-bold"><span className="flex">A<Caret className="mt-1 rotate-180 text-[#2b5fb3]" /></span></RB>
          <RB label="Schrift verkleinern" className="w-[22px] font-['Liberation_Serif',serif] text-[14px] font-bold"><span className="flex">A<Caret className="text-[#2b5fb3]" /></span></RB>
          <Sep className="w-[10px]" />
          <RB label="Groß-/Kleinschreibung" className="w-[30px] font-['Liberation_Serif',serif] text-[14px] font-bold">Aa<Caret /></RB>
          <Sep className="w-[14px]" />
          <RB label="Formatierung löschen" className="w-[18px]">
            <svg width="17" height="17" viewBox="0 0 17 17"><rect x=".5" y=".5" width="12" height="9" fill="#eef2fa" stroke="#8ca0c4" /><text x="1" y="8" fontSize="7" fontWeight="bold" fontFamily="Liberation Serif, serif">AB</text><path d="M6 12l6-5 4 4-5 5q-3 0-5-4z" fill="#c9d6ec" stroke="#7186ad" /></svg>
          </RB>
        </div>
        <div className="mt-2 flex h-[22px] items-center pl-[5px] text-black">
          <RB label="Fett" className="w-6 font-['Liberation_Serif',serif] text-[15px] font-bold">F</RB>
          <RB label="Kursiv" className="w-[22px] font-['Liberation_Serif',serif] text-[15px] font-bold italic">K</RB>
          <RB label="Unterstrichen" className="w-6 font-['Liberation_Serif',serif] text-[15px] font-bold underline">U</RB>
          <RB label="Unterstreichungsart" className="w-3"><Caret /></RB>
          <RB label="Durchgestrichen" className="w-6 font-['Liberation_Serif',serif] text-[12px] font-bold line-through">abc</RB>
          <RB label="Tiefgestellt" className="w-6 text-[13px] font-bold"><span>x<sub className="text-[7px] text-[#2b5fb3]">2</sub></span></RB>
          <RB label="Hochgestellt" className="w-5 text-[13px] font-bold"><span>x<sup className="text-[7px] text-[#2b5fb3]">2</sup></span></RB>
          <Sep className="w-3" />
          <RB label="Texteffekte" className="w-[34px]"><svg width="17" height="17" viewBox="0 0 17 17"><text x="2" y="15" fontSize="18" fontWeight="bold" fontFamily="Liberation Sans, sans-serif" fill="#fff" stroke="#7db7ea" strokeWidth="1.4">A</text></svg><Caret className="text-[#555]" /></RB>
          <RB label="Hervorhebungsfarbe" className="w-8"><svg width="16" height="17" viewBox="0 0 16 17"><rect width="10" height="10" fill="#fdf28a" /><text x="0" y="8" fontSize="9" fontWeight="bold" fontFamily="Liberation Sans, sans-serif">ab</text><path d="M7 10l7-8 2 2-7 7z" fill="#6f8fc4" /><rect y="13" width="16" height="4" fill="#ffff00" /></svg><Caret className="text-[#555]" /></RB>
          <RB label="Schriftfarbe" className="w-8"><svg width="16" height="17" viewBox="0 0 16 17"><text x="2.500" y="11" fontSize="15" fontWeight="bold" fontFamily="Liberation Serif, serif" fill="#2b4f94">A</text><rect y="13" width="16" height="4" fill="#ff0000" /></svg><Caret className="text-[#555]" /></RB>
        </div>
      </Group>
      <Group title="Absatz" launcher className="w-[228px]">
        <div className="flex h-[32px] items-center pl-[7px] pt-[11px]">
          <RB label="Aufzählung" className="w-[34px]"><ListIcon kind="bullet" /><Caret className="ml-1" /></RB>
          <RB label="Nummerierung" className="w-[34px]"><ListIcon kind="number" /><Caret className="ml-1" /></RB>
          <RB label="Liste mit mehreren Ebenen" className="w-[30px]"><ListIcon kind="multi" /><Caret /></RB>
          <Sep className="w-2" />
          <RB label="Einzug verkleinern" className="w-[22px]"><IndentIcon /></RB>
          <RB label="Einzug vergrößern" className="w-5"><IndentIcon right /></RB>
          <Sep className="w-4" />
          <RB label="Sortieren" className="w-3.5"><svg width="15" height="17" viewBox="0 0 15 17"><text x="0" y="8" fontSize="9" fontWeight="bold" fontFamily="Liberation Serif, serif" fill="#2b5fb3">A</text><text x="0" y="16" fontSize="9" fontWeight="bold" fontFamily="Liberation Serif, serif" fill="#9a2b2b">Z</text><path d="M12 2v12M9.500 11l2.500 3.500 2.500-3.500" stroke="#111" fill="none" /></svg></RB>
          <Sep className="w-[18px]" />
          <RB label="Alle anzeigen" className="w-4 text-[16px] font-bold">¶</RB>
        </div>
        <div className="mt-2 flex h-[22px] items-center pl-[5px]">
          <RB label="Linksbündig" className="w-[22px]"><Bars rows={[[0, 14], [0, 9], [0, 14], [0, 9], [0, 14]]} /></RB>
          <RB label="Zentriert" className="w-6"><Bars rows={[[0, 14], [2, 10], [0, 14], [2, 10], [0, 14]]} /></RB>
          <RB label="Rechtsbündig" className="w-6"><Bars rows={[[0, 14], [5, 9], [0, 14], [5, 9], [0, 14]]} /></RB>
          <RB label="Blocksatz" className="w-[22px] rounded-[3px] border border-[#c29b29] bg-gradient-to-b from-[#fde18a] to-[#fbc94a]"><Bars rows={[[0, 14], [0, 14], [0, 14], [0, 14], [0, 14]]} /></RB>
          <Sep className="w-3" />
          <RB label="Zeilenabstand" className="w-7"><svg width="15" height="15" viewBox="0 0 15 15"><path d="M2.500 1v13M.5 4l2-3 2 3M.5 11l2 3 2-3" stroke="#2b5fb3" fill="none" strokeWidth="1.2" /><path d="M7 3h8M7 6h8M7 9h8M7 12h8" stroke="#222" /></svg><Caret /></RB>
          <Sep className="w-2.5" />
          <RB label="Schattierung" className="w-[34px]"><svg width="16" height="16" viewBox="0 0 16 16"><path d="M2 7l6-5 5 5-6 5z" fill="#e8eef7" stroke="#51698f" /><path d="M13 7q3 3 1 5-2-1-1-5z" fill="#2b5fb3" /><path d="M6 0v5" stroke="#51698f" /><rect y="13.500" width="15" height="2" fill="#fff" stroke="#9a9a9a" strokeWidth=".7" /></svg><Caret className="ml-px" /></RB>
          <RB label="Rahmen" className="w-8"><svg width="14" height="14" viewBox="0 0 14 14"><path d="M.5.5h13v12M.5.5v12M7 .5v12M.5 6.500h13" stroke="#666" strokeDasharray="1 1.500" fill="none" /><path d="M0 13h14" stroke="#222" strokeWidth="1.4" /></svg><Caret className="ml-1" /></RB>
        </div>
      </Group>
      <Group title="Formatvorlagen" launcher className="min-w-0 flex-1">
        <div className="flex pl-[5px] pt-1.5">
          <div className="flex h-[60px] min-w-0 border border-[#c3c6cb] bg-white">
            {styles.map(([sample, name, cls], i) => (
              <button key={i} className={"flex w-[72px] shrink-0 flex-col items-center overflow-hidden " + (i === 4 ? "my-px rounded-[2px] border border-[#c29b29] shadow-[inset_0_0_0_3px_#ffdf74]" : "border border-transparent")}>
                <span className={`mt-2 h-7 w-[60px] overflow-hidden whitespace-pre text-left leading-7 text-black ${cls}`}>{sample}</span>
                <span className="mt-0.5 text-[11px] leading-4">{name}</span>
              </button>
            ))}
            <div className="flex w-[15px] shrink-0 flex-col divide-y divide-[#c3c6cb] border-l border-[#c3c6cb] bg-[#f7f8f9]">
              <button aria-label="Zeile nach oben" className="flex flex-1 items-center justify-center text-[#b0b0b0]"><Caret className="rotate-180" /></button>
              <button aria-label="Zeile nach unten" className="flex flex-1 items-center justify-center"><Caret /></button>
              <button aria-label="Weitere" className="flex flex-1 flex-col items-center justify-center gap-0.5"><span className="h-px w-[7px] bg-[#444]" /><Caret /></button>
            </div>
          </div>
          <button className="flex flex-1 flex-col items-center pt-0.5 leading-[14px]">
            <svg width="30" height="30" viewBox="0 0 30 30" aria-hidden="true">
              <text x="0" y="20" fontSize="25" fontWeight="bold" fontFamily="Liberation Serif, serif" fill="#fff" stroke="#b14fb8" strokeWidth="1.8">A</text>
              <text x="8" y="28" fontSize="28" fontWeight="bold" fontFamily="Liberation Serif, serif" fill="#5b94e0" stroke="#2d66b5" strokeWidth=".8">A</text>
            </svg>
            <span className="mt-[3px]">Formatvorlagen</span>
            <span className="flex items-center gap-1">ändern <Caret /></span>
          </button>
        </div>
      </Group>
      <Group title="Bearbeiten" className="w-24">
        <div className="flex flex-col pl-2 pt-[3px]">
          <button className="flex h-[22px] items-center gap-1"><svg width="15" height="14" viewBox="0 0 15 14"><path d="M1 14V7l2-6h3v13zM9 14V1h3l2 6v7z" fill="#3c5f9c" /><path d="M5 5h5v4H5z" fill="#24406f" /><path d="M2 9h3M10 9h3" stroke="#dbe6f6" /></svg>Suchen <Caret className="ml-0.5" /></button>
          <button className="flex h-[22px] items-center gap-1"><svg width="16" height="16" viewBox="0 0 16 16"><text x="0" y="8" fontSize="10" fontWeight="bold" fontFamily="Liberation Sans, sans-serif" fill="#222">a<tspan fill="#aaa">b</tspan></text><text x="6" y="15" fontSize="9" fontWeight="bold" fontFamily="Liberation Sans, sans-serif" fill="#222">a<tspan fill="#1b8a2a">c</tspan></text><path d="M1 10v3h3" stroke="#2b5fb3" fill="none" strokeWidth="1.4" /></svg>Ersetzen</button>
          <button className="flex h-[22px] items-center gap-1"><svg width="15" height="14" viewBox="0 0 15 14"><path d="M4 0l8 8-4 .5 2 4-2 1-2-4-2 2.500z" fill="#fff" stroke="#44618f" /></svg>Markieren <Caret className="ml-0.5" /></button>
        </div>
      </Group>
      <div className="w-[15px]" />
    </div>
  );
}

/* ---------- word: rulers ---------- */

const RulerCells = ({ labels }) =>
  labels.map((n, i) => (
    <span key={i} className="grid flex-1 grid-cols-4 items-center justify-items-center">
      <i className="h-0.5 w-px bg-[#555]" />
      <i className="h-[5px] w-px bg-[#555]" />
      <i className="h-0.5 w-px bg-[#555]" />
      <span className="flex w-0 justify-center">{n}</span>
    </span>
  ));

function HRuler() {
  return (
    <div className="mx-auto flex h-[13px] w-[641px] border border-[#8d9299] bg-[linear-gradient(to_right,#cdd0d5_91px,#fbfbfb_91px,#fbfbfb_576px,#cdd0d5_576px)] text-[9px] leading-none text-[#444]">
      <div className="flex w-[91px] pl-1"><RulerCells labels={["2", "1", ""]} /></div>
      <div className="relative flex w-[485px] pl-1">
        <RulerCells labels={["1", "2", "3", "4", "5", "6", "7", "8", "9", "10", "11", "12", "13", "14", "15", ""]} />
        <svg className="absolute -left-[5px] -top-1" width="10" height="22" viewBox="0 0 10 22" aria-hidden="true">
          <path d="M.5.500h9v3L5 9 .5 3.500zM.5 16V13.500L5 9l4.500 4.500V16zM.5 16h9v5h-9z" fill="#f1f1f1" stroke="#777" />
        </svg>
        <svg className="absolute -right-[5px] top-1" width="10" height="8" viewBox="0 0 10 8" aria-hidden="true">
          <path d="M.5 7.500V4.500L5 .5l4.500 4v3z" fill="#f1f1f1" stroke="#777" />
        </svg>
      </div>
      <div className="flex w-[61px] pl-1"><RulerCells labels={["17", ""]} /></div>
    </div>
  );
}

const vNumbers = Array.from({ length: 31 }, (_, i) => i + 1);

function VRuler() {
  return (
    <div className="ml-[5px] flex w-[14px] flex-col overflow-hidden border-x border-[#8d9299] bg-[linear-gradient(to_bottom,#fbfbfb_746px,#cdd0d5_746px,#cdd0d5_100%)] text-[9px] leading-none text-[#444]">
      {vNumbers.map((n) => (
        <span key={n} className="grid h-[30px] shrink-0 grid-rows-4 items-center justify-items-center">
          <span className="-rotate-90">{n > 25 ? n - 25 : n}</span>
          <i className="h-px w-0.5 bg-[#555]" />
          <i className="h-px w-[5px] bg-[#555]" />
          <i className="h-px w-0.5 bg-[#555]" />
        </span>
      ))}
    </div>
  );
}

/* ---------- word: document ---------- */

const Line = ({ fill, className = "", children }) => (
  <span className={`block h-5 whitespace-nowrap leading-5 ${fill ? "text-justify [text-align-last:justify]" : ""} ${className}`}>{children}</span>
);

const Definition = ({ term, cols, className, children }) => (
  <dl className={`grid ${cols} ${className}`}>
    <dt className="font-bold leading-5">{term}</dt>
    <dd>{children}</dd>
  </dl>
);

function ProjectDialog() {
  return (
    <form className="relative h-[169px] w-[404px] overflow-hidden bg-[#6b6e72] text-[11px] leading-none">
      <div className="mx-px h-[167px] rounded-b-[6px] border border-t-0 border-[#1d2a3a] bg-gradient-to-b from-[#d8eafb] to-[#a9d0f5] px-1.5 pb-1.5">
        <div className="h-full border border-t-0 border-[#6b7785] bg-[#f0f0f0] px-[3px] pt-0.5">
          <div className="grid grid-cols-[70px_150px_1fr] border border-[#b8b8b8] px-1 pb-0.5 pt-1 shadow-[inset_1px_1px_0_#fff]">
            <label htmlFor="bez" className="pt-[3px] text-[10px] font-bold">Bezeichnung:</label>
            <input id="bez" defaultValue="Projekt 1" className={`col-span-2 h-[15px] bg-white pl-0.5 ${sunken}`} />
            <span className="py-2 text-[10px] font-bold">angelegt am:</span><span /><span className="py-2 text-[10px] font-bold">ID:</span>
            <label htmlFor="beschr" className="whitespace-nowrap text-[10px] font-bold">Beschreibung:</label>
            <textarea id="beschr" className={`col-span-2 h-[55px] resize-none bg-white ${sunken}`} />
            <span />
            <label className="flex items-center gap-1.5 py-[9px]"><input type="checkbox" className={`size-2.5 appearance-none bg-white ${sunken}`} />Variationen aktiv</label>
            <label className="flex items-center gap-1.5 py-[9px]"><input type="checkbox" className={`size-2.5 appearance-none bg-white ${sunken}`} />Monitoringabruf erlauben</label>
          </div>
          <div className="mt-[7px] flex justify-center gap-1.5 pr-2">
            <button type="button" className="h-[19px] w-[72px] border border-[#555] shadow-[inset_-1px_-1px_0_#909090]"><u>O</u>K</button>
            <button type="button" className={`h-[19px] w-[69px] ${raised}`}><u>S</u>chliessen</button>
          </div>
        </div>
      </div>
    </form>
  );
}

const treeRows = [
  "2015-09-25_Komplexes Modell", "2015-09-28_Komplexes Modell (2)", "2015-10-28_Modellumbau", "2016-01-13_Ziel Becken detail", "2016-05-02 Szenario 1 - Wasting",
  "2016-05-02 Szenario 2 - Wasting", "2016-06-07 Szenario 1 - mit Beschriftungen", "2016-06-16 Szenario 2.1 - mit Beschriftungen", "2016-06-23 Szenario 2.1 - 2021 - OWP KSWHA", "2016-06-24 Szenario 2.1 - 2021 - OWP KSWHA",
  "2016-07-07 Szenario 2.2 - 2021- OWP KSWHA", "2016-07-07 Szenario 3.1 800.00 m³/a, Bypass", "2016-08-01 Szenario 5.1x - nur Ref - mit Per", "2016-08-01 Szenario 5.1x - nur Ref - ohne Per", "2016-08-01 Szenario 5.1x - Wichte BWZ",
];

function ThumbExplorer({ blue }) {
  const head = blue ? "text-[4px] leading-[5px]" : "text-[5px] leading-[7px]";
  return (
    <div className={"flex flex-col rounded-[2px] border text-[#333] " + (blue ? "h-[163px] w-[356px] border-[#37485e] bg-[#b5d5f2] px-[3px] pb-0.5" : "h-[217px] w-full border-[#9a9a9a] bg-[#ececec] px-0.5 pb-1")}>
      <div className={`flex items-center gap-1 ${blue ? "h-[8px]" : "h-[10px] bg-gradient-to-r from-white via-[#e8f3fb] to-white"} ${head}`}>
        <AppIcon w={blue ? 4 : 5} h={blue ? 4 : 6} />
        <span className="flex-1">Talsim-NG Explorer CLIENT</span>
        {blue ? <span className="h-1 w-6 bg-gradient-to-r from-[#8fa8c4] to-[#d33a28]" /> : <span className="flex gap-2 border border-[#c9c9c9] px-1 leading-none"><span>–</span><span>▫</span><span>x</span></span>}
      </div>
      <div className={`bg-[#dce2f2] pl-0.5 ${head}`}>Anzeige &nbsp; Projekte+Varianten</div>
      <div className={`flex min-h-0 flex-1 flex-col bg-[#f0f0f0] px-0.5 ${head}`}>
        <p className="text-[#3399ff]"><b>aktive Datenbank:</b> D:\Talsim-NG\Customers\Beispiel\projectData\Beispiel\dataBase\Beipiel_Data.mdb</p>
        <p className="text-[#3399ff]"><b>aktive Simulation:</b> LabelAktiveSimID</p>
        <div className={`grid min-h-0 flex-1 gap-x-0.5 ${blue ? "mt-1 grid-cols-[86fr_130fr_131fr]" : "mt-[3px] grid-cols-[115fr_178fr_178fr]"}`}>
          <div className="flex min-h-0 min-w-0 flex-col">
            <b>Varianten:</b>
            <div className="relative min-h-0 flex-1 overflow-hidden border border-[#999] bg-white text-[4px] leading-[4px]">
              {blue ? (
                <>
                  {treeRows.map((r) => <div key={r} className="flex items-center gap-1 whitespace-nowrap pl-px text-[3px]"><span>⊞</span><span className="h-[3px] w-[3px] bg-[#2b3f8c]" />{r}</div>)}
                  {Array.from({ length: 13 }, (_, i) => <div key={i} className="flex items-center gap-1 pl-px text-[3px]"><span>⊞</span><span className="h-[3px] w-[3px] bg-[#2b3f8c]" />20</div>)}
                  <div className="flex items-center gap-1 pl-1.5"><CheckBall size={3} /><span className="bg-[#3399ff] text-white">Neues Projekt</span></div>
                  <div className="flex items-center gap-1 pl-2.5"><CheckBall size={3} />Neue Systemvariante</div>
                  <div className="absolute left-[13px] top-[56px] w-[65px] border border-[#979797] bg-[#f0f0f0] py-px pl-2 leading-[5px] shadow-[1px_1px_1px_rgba(0,0,0,0.5)]">
                    {menuGroups.map((g, i) => (
                      <div key={i} className={i ? "mt-0.5" : ""}>
                        {g.filter(([, k]) => k !== "off").map(([t, k]) => <div key={t} className={"whitespace-nowrap text-[3px] " + (k === "hot" ? "bg-[#dfeaf6]" : "")}>{t}</div>)}
                      </div>
                    ))}
                  </div>
                </>
              ) : (
                <div className="flex items-center gap-0.5 pl-1.5 pt-px text-[5px] leading-[6px]"><AppIcon w={5} h={6} top="#1414e6" />Projekt 1</div>
              )}
            </div>
          </div>
          <div className="flex min-w-0 flex-col">
            <b>Simulationen:</b>
            <div className="flex-1 border border-[#808080] bg-white">
              <div className="flex gap-0.5 border-b border-[#888] bg-[#f0f0f0] pl-0.5 leading-[5px]">
                <span className={(blue ? "w-8" : "w-[46px]") + " border-r border-[#999]"}>Bezeichnung</span><span className="w-3 border-r border-[#999]">ID</span><span className="w-3 border-r border-[#999]">sim...</span><span className="w-3 border-r border-[#999]">von</span><span className="w-3 border-r border-[#999]">bis</span>
              </div>
              {blue && <div className="flex items-center gap-0.5 pl-px"><span className="h-[3px] w-[3px] bg-[#f2a52a]" /><span className="w-8 whitespace-nowrap text-[3px]">ohne Beschreibung...</span><span>2860</span></div>}
            </div>
          </div>
          <div className="flex min-w-0 flex-col">
            <div className="flex gap-0.5"><b className="border-b border-r border-[#888]">Ergebnisse laden</b><span className="w-7 border border-[#999] bg-white" /></div>
            <div className="flex-1 border border-[#aaa] bg-white" />
          </div>
        </div>
      </div>
    </div>
  );
}

const TreeShot = ({ tall, active }) => (
  <figure className={"flex flex-col bg-[#f0f0f0] text-[11px] " + (tall ? "h-[70px] w-[121px]" : "h-[62px] w-[127px]")}>
    <b className={"pl-[3px] text-[10px] leading-[14px] " + (tall ? "pt-[11px]" : "pt-[3px]")}>Varianten:</b>
    <div className="ml-1 mt-1 flex-1 border-l-2 border-t-2 border-[#808080] bg-white">
      <div className="flex items-center gap-1 pl-1.5 leading-[13px]">
        <span className="w-2 border-t border-dotted border-[#888]" />
        {active ? <CheckBall size={10} /> : <AppIcon w={11} h={12} top="#1414e6" />}
        <span className={active ? "bg-[#ececec] px-0.5 text-[10px]" : "text-[10px]"}>Projekt 1</span>
      </div>
    </div>
  </figure>
);

const RunningHead = () => (
  <div className="text-[#7b7b7b]">
    <div className="flex h-3 items-center gap-1">
      <svg width="11" height="11" viewBox="0 0 11 11" aria-hidden="true"><circle cx="5.5" cy="5.5" r="5" fill="#fff" stroke="#777" /><path d="M1 4.500h9v2H1z" fill="#dff" stroke="#777" strokeWidth=".7" /></svg>
      <span className="text-[12px] font-bold leading-3 text-[#e9f2f4] [-webkit-text-stroke:1px_#7b7b7b] [paint-order:stroke_fill]">SYDRO <small className="text-[9px]">CONSULT</small></span>
    </div>
    <p className="mt-0.5 text-[8px] leading-[9px]">
      <span className="block whitespace-nowrap text-justify [text-align-last:justify]">Flussgebietsmodellierung zum Antrag des Werkes Zielitz auf Änderung der wasserrechtlichen Erlaubnis für die Einleitung salz-</span>
      <span className="block">haltigen Abwassers in die Elbe</span>
    </p>
    <hr className="-mx-px mt-0.5 border-[#7b7b7b]" />
  </div>
);

const PageNo = ({ n, className }) => (
  <div className={`-mx-px border-t border-[#7b7b7b] text-center text-[9px] leading-[10px] text-[#8a8a8a] ${className}`}>{n}</div>
);

const sheet = "overflow-hidden bg-white pl-[91px] pr-[61px]";
const pageShadow = "shadow-[0_2px_12px_rgba(70,74,80,0.75)]";

function Pages() {
  return (
    <div className={`mx-auto grid w-[1288px] grid-cols-2 gap-x-[14px] gap-y-3 ${sans} text-[12px] text-black`}>
      <article className={`${sheet} ${pageShadow} h-[797px]`}>
        <ProjectDialog />
        <div className="mt-[21px]"><ThumbExplorer /></div>
        <p className="mt-[18px]">
          <Line fill>Das Projekt muss im nächsten Schritt aktiviert werden, damit es bearbeitet werden kann.</Line>
          <Line>Dazu klicken Sie mit rechts auf <i>Projekt 1 <Arrow /> aktivieren</i>.</Line>
        </p>
        <div className="mt-[18px] flex items-end">
          <TreeShot />
          <span className="w-[23px] text-center leading-3"><Arrow /></span>
          <TreeShot tall active />
        </div>
        <p className="mt-[18px]">
          <Line fill>Im Projektmanager können mit Rechtsklick auf das Projekt folgende weitere Schaltflächen</Line>
          <Line>genutzt werden:</Line>
        </p>
        <Definition term="Neues Projekt anlegen" cols="grid-cols-[152px_1fr]" className="mt-[13px]"><Line>Es wird ein neues leeres und inaktives Projekt angelegt</Line></Definition>
        <Definition term="Neue Variante anlegen" cols="grid-cols-[152px_1fr]" className="mt-3.5">
          <Line fill>Es wird eine neue leere Variante angelegt, die dem aktivierten</Line>
          <Line>Projekt zu geordnet wird</Line>
        </Definition>
        <Definition term="aktivieren" cols="grid-cols-[152px_1fr]" className="mt-4">
          <Line>Das markierte Projekt wird zum aktiven Projekt (<span className="inline-block px-0.5"><CheckBall size={11} /></span>)</Line>
        </Definition>
        <PageNo n="22" className="mt-[19px]" />
      </article>

      <article className={`${sheet} ${pageShadow} h-[797px]`}>
        <div className="-mt-[9px] pl-[152px]"><Line>ben zum markierten Projekt bearbeitet werden können</Line></div>
        <Definition term="löschen" cols="grid-cols-[152px_1fr]" className="mt-3">
          <Line fill>Das markierte Projekt wird mit allen zugehörigen Varianten ge-</Line>
          <Line fill>löscht. Dieser Vorgang kann nicht rückgängig gemacht werden.</Line>
        </Definition>
        <Definition term={<>Variante <span className="underline decoration-[#2a9a3a] decoration-wavy decoration-1">importieren</span></>} cols="grid-cols-[152px_1fr]" className="mt-[13px]">
          <Line fill>Einlesen eines ASCII-Datensatz in eine Gebiets-Datenbank. Es</Line>
          <Line fill>wird bei einem Import stets eine neue Variante angelegt und</Line>
          <Line fill>dem aktiven Projekt zugeordnet. Beim Aufruf der Funktion er-</Line>
          <Line fill>scheint das Dialogfenster Importdatensatz auswählen mit der</Line>
          <Line fill>Sucheinschränkung *.SYS. Hierin wird die Datei mit der Sys-</Line>
          <Line>temlogik des einzulesenden Datensatzes ausgewählt.</Line>
        </Definition>
        <Line className="mt-3.5 font-bold text-[#ff0000]">Simulationsordner</Line>
        <Line className="mt-[13px] font-bold text-[#ff0000]">Kurzfristprognose</Line>
        <Line className="mt-3.5"><b>Variante zum Server exportieren</b> Die aktivierte Variante wird zum Server exportiert</Line>
        <h3 className="mt-[13px] flex h-5 gap-2.5 font-bold leading-5"><span>2.2.2.2</span><span>Variante</span></h3>
        <Line className="mt-1.5">Damit ein Projektgebiet aufgebaut werden kann, muss eine Variante angelegt werden.</Line>
        <Line className="mt-3.5">Im Projektmanager Rechtsklick auf das <i>Projekt 1 <Arrow /> Neue Variante anlegen</i>.</Line>
        <div className="ml-[3px] mt-[17px]"><ThumbExplorer blue /></div>
        <p className="mt-4">
          <Line fill>Es öffnet sich das Dialogfenster Systemvariante anlegen, in dem Angaben zur Variante ge-</Line>
          <Line>speichert werden.</Line>
        </p>
        <PageNo n="23" className="mt-[127px]" />
      </article>

      <article className={`${sheet} ${pageShadow} h-[120px] pt-[34px]`}>
        <RunningHead />
        <div className="ml-1 mt-2 flex h-[30px] w-[224px] items-start gap-1 border border-[#8a96a4] bg-gradient-to-b from-[#d3e9f6] to-[#a9cdea] pl-1 text-[8px] leading-[11px] text-[#333]">
          <svg className="mt-0.5" width="7" height="9" viewBox="0 0 7 9" aria-hidden="true"><path d="M.5.500h4l2 2v6h-6z" fill="#fff" stroke="#3b73c5" /></svg>
          <span className="flex-1">Systemvariante anlegen</span>
          <span className="mr-0.5 w-5 rounded-b-[2px] border border-t-0 border-[#9ab] bg-white/60 text-center leading-2">x</span>
        </div>
      </article>

      <article className={`${sheet} ${pageShadow} h-[120px] pt-[34px]`}>
        <RunningHead />
        <Definition term="Kopieren:" cols="grid-cols-[76px_1fr]" className="mt-[3px] text-[#ff0000]">
          <Line fill className="font-bold">Kopieren der markierten Variante. Diese muss eine aktive Simulation</Line>
        </Definition>
      </article>
    </div>
  );
}

function VScroll() {
  return (
    <div className="flex w-[17px] flex-col items-center bg-[#dde0e5] text-[#555]">
      <div className="mt-[6px] h-[3px] w-[9px] bg-[#777]" />
      <button aria-label="Lineal" className="mt-0.5 flex h-4 w-[15px] items-center justify-center border border-[#8d9299] bg-[#eceef1]">
        <svg width="11" height="11" viewBox="0 0 11 11"><path d="M.5.500h4v4h-4zM5 5l5.500 5.500M6 .5h4.500v4L6 .5zM.5 6.500v4h4z" fill="none" stroke="#555" /></svg>
      </button>
      <button aria-label="Nach oben" className="flex h-4 w-full items-center justify-center"><svg width="9" height="5" viewBox="0 0 9 5"><path d="M0 5h9L4.500 0z" fill="#444" /></svg></button>
      <div className="flex w-full flex-1 flex-col border-x border-[#c4c8ce]">
        <div className="flex-[480]" />
        <div className="flex flex-[38] items-center justify-center rounded-[2px] border border-[#9da2a9] bg-gradient-to-r from-[#f7f8f9] to-[#dfe2e6]"><Bars w={7} rows={[[0, 7], [0, 7], [0, 7]]} /></div>
        <div className="flex-[295]" />
      </div>
      <button aria-label="Nach unten" className="flex h-4 w-full items-center justify-center"><svg width="9" height="5" viewBox="0 0 9 5"><path d="M0 0h9L4.500 5z" fill="#444" /></svg></button>
      <div className="flex h-[52px] w-full flex-col items-center justify-around border-t border-[#a9adb3]">
        <button aria-label="Vorherige Seite"><svg width="7" height="8" viewBox="0 0 7 8"><path d="M0 4l3.500-4L7 4zM0 8l3.500-4L7 8z" fill="#333" /></svg></button>
        <button aria-label="Objekt auswählen"><svg width="7" height="7" viewBox="0 0 7 7"><circle cx="3.5" cy="3.5" r="2.8" fill="#eee" stroke="#444" /></svg></button>
        <button aria-label="Nächste Seite"><svg width="7" height="8" viewBox="0 0 7 8"><path d="M0 0h7L3.500 4zM0 4h7L3.500 8z" fill="#333" /></svg></button>
      </div>
    </div>
  );
}

function StatusBar() {
  return (
    <footer className="flex h-[23px] shrink-0 items-center border-t border-[#8a8f96] bg-gradient-to-b from-[#e4e6ea] via-[#d2d5d9] to-[#bcc0c5] text-[11px] text-[#333]">
      <span className="flex h-full w-[96px] items-center border-r border-[#a3a7ad] pl-1.5">Seite: 24 von 38</span>
      <span className="flex h-full w-[87px] items-center border-r border-[#a3a7ad] pl-2.5">Wörter: 4.431</span>
      <span className="flex h-full w-8 items-center justify-center border-r border-[#a3a7ad]">
        <svg width="15" height="14" viewBox="0 0 15 14" aria-hidden="true"><path d="M1 2q3-2 6 0v9q-3-2-6 0zM13 2q-3-2-6 0v9q3-2 6 0z" fill="#fff" stroke="#5a6a80" /><circle cx="11" cy="10" r="3.5" fill="#d83a2a" /><path d="M9.500 8.500l3 3M12.500 8.500l-3 3" stroke="#fff" /></svg>
      </span>
      <span className="flex h-full w-[138px] items-center border-r border-[#a3a7ad] pl-2.5">Deutsch (Deutschland)</span>
      <div className="ml-auto flex h-full items-center border-l border-[#a3a7ad] pl-1">
        <button aria-label="Seitenlayout" className="flex h-5 w-[19px] items-center justify-center rounded-[2px] border border-[#c29b29] bg-[#fbd563]"><svg width="11" height="12" viewBox="0 0 11 12"><rect x=".5" y=".5" width="10" height="11" fill="#fff" stroke="#555" /><path d="M2 3h7M2 5h7M2 7h7M2 9h7" stroke="#555" /></svg></button>
        <button aria-label="Vollbild-Lesemodus" className="ml-1"><svg width="12" height="12" viewBox="0 0 12 12"><path d="M.5 1.500q3-1 5.500.5 2.500-1.500 5.500-.5v9q-3-1-5.500.5-2.500-1.500-5.500-.5zM6 2v9M2 4h2.500M2 6h2.500M7.500 4H10M7.500 6H10" fill="#fff" stroke="#555" /></svg></button>
        <button aria-label="Weblayout" className="ml-1.5"><svg width="12" height="13" viewBox="0 0 12 13"><rect x=".5" y=".5" width="8" height="10" fill="#fff" stroke="#555" /><path d="M2 3h5M2 5h5M2 7h5" stroke="#555" /><circle cx="8.500" cy="9.500" r="3" fill="#2f7f9c" /></svg></button>
        <button aria-label="Gliederung" className="ml-1.5"><svg width="11" height="11" viewBox="0 0 11 11"><path d="M0 1h7M2 3.500h8M4 6h7M2 8.500h8M4 10.500h7" stroke="#555" /></svg></button>
        <button aria-label="Entwurf" className="ml-2"><svg width="11" height="11" viewBox="0 0 11 11"><path d="M0 1h11M0 3.500h11M0 6h11M0 8.500h11M0 10.500h7" stroke="#555" /></svg></button>
        <span className="ml-3 w-[31px]">80 %</span>
        <button aria-label="Verkleinern" className="ml-1.5 flex size-4 items-center justify-center rounded-full border border-[#777] bg-white"><span className="h-0.5 w-2 bg-[#555]" /></button>
        <input
          type="range"
          aria-label="Zoom"
          defaultValue="41"
          className="h-4 w-[100px] appearance-none bg-[linear-gradient(to_bottom,transparent_7px,#8a8f96_7px,#8a8f96_8px,#f4f4f4_8px,#f4f4f4_9px,transparent_9px)] [&::-webkit-slider-thumb]:h-3 [&::-webkit-slider-thumb]:w-2 [&::-webkit-slider-thumb]:appearance-none [&::-webkit-slider-thumb]:rounded-b-[4px] [&::-webkit-slider-thumb]:border [&::-webkit-slider-thumb]:border-[#666] [&::-webkit-slider-thumb]:bg-white"
        />
        <button aria-label="Vergrößern" className="mr-1 flex size-4 items-center justify-center rounded-full border border-[#777] bg-white"><svg width="8" height="8" viewBox="0 0 8 8"><path d="M0 4h8M4 0v8" stroke="#555" strokeWidth="1.8" /></svg></button>
      </div>
    </footer>
  );
}

function WordWindow() {
  return (
    <main className="flex min-h-0 flex-col overflow-hidden bg-white">
      <TitleAndTabs />
      <Ribbon />
      <div className="flex min-h-0 flex-1 bg-gradient-to-b from-[#cfd2d7] to-[#b4b8bd]">
        <div className="flex min-w-0 flex-1 flex-col overflow-hidden">
          <div className="flex h-7 shrink-0 bg-[#cdd0d5] pt-1">
            <button aria-label="Tabstopp" className="flex h-6 w-6 items-center justify-center border border-[#8d9299] bg-[#c4c8ce]">
              <span className="flex size-[15px] items-center justify-center border border-[#777] bg-white"><svg width="7" height="7" viewBox="0 0 7 7"><path d="M1 0v6h6" stroke="#333" strokeWidth="2" fill="none" /></svg></span>
            </button>
            <div className="flex-1 pl-[647px] pt-[5px]"><HRuler /></div>
          </div>
          <div className="flex min-h-0 flex-1">
            <VRuler />
            <div className="h-full min-w-0 flex-1 overflow-hidden pl-[5px]"><Pages /></div>
          </div>
        </div>
        <VScroll />
      </div>
      <StatusBar />
    </main>
  );
}

export default function App() {
  return (
    <div className="grid h-screen grid-cols-2 grid-rows-[minmax(0,1fr)] overflow-hidden bg-white font-['Open_Sans',sans-serif] text-black">
      <div className="relative overflow-hidden">
        <DesktopIcons />
        <ServerWindow />
        <ExplorerWindow />
        <Taskbar />
      </div>
      <WordWindow />
    </div>
  );
}
